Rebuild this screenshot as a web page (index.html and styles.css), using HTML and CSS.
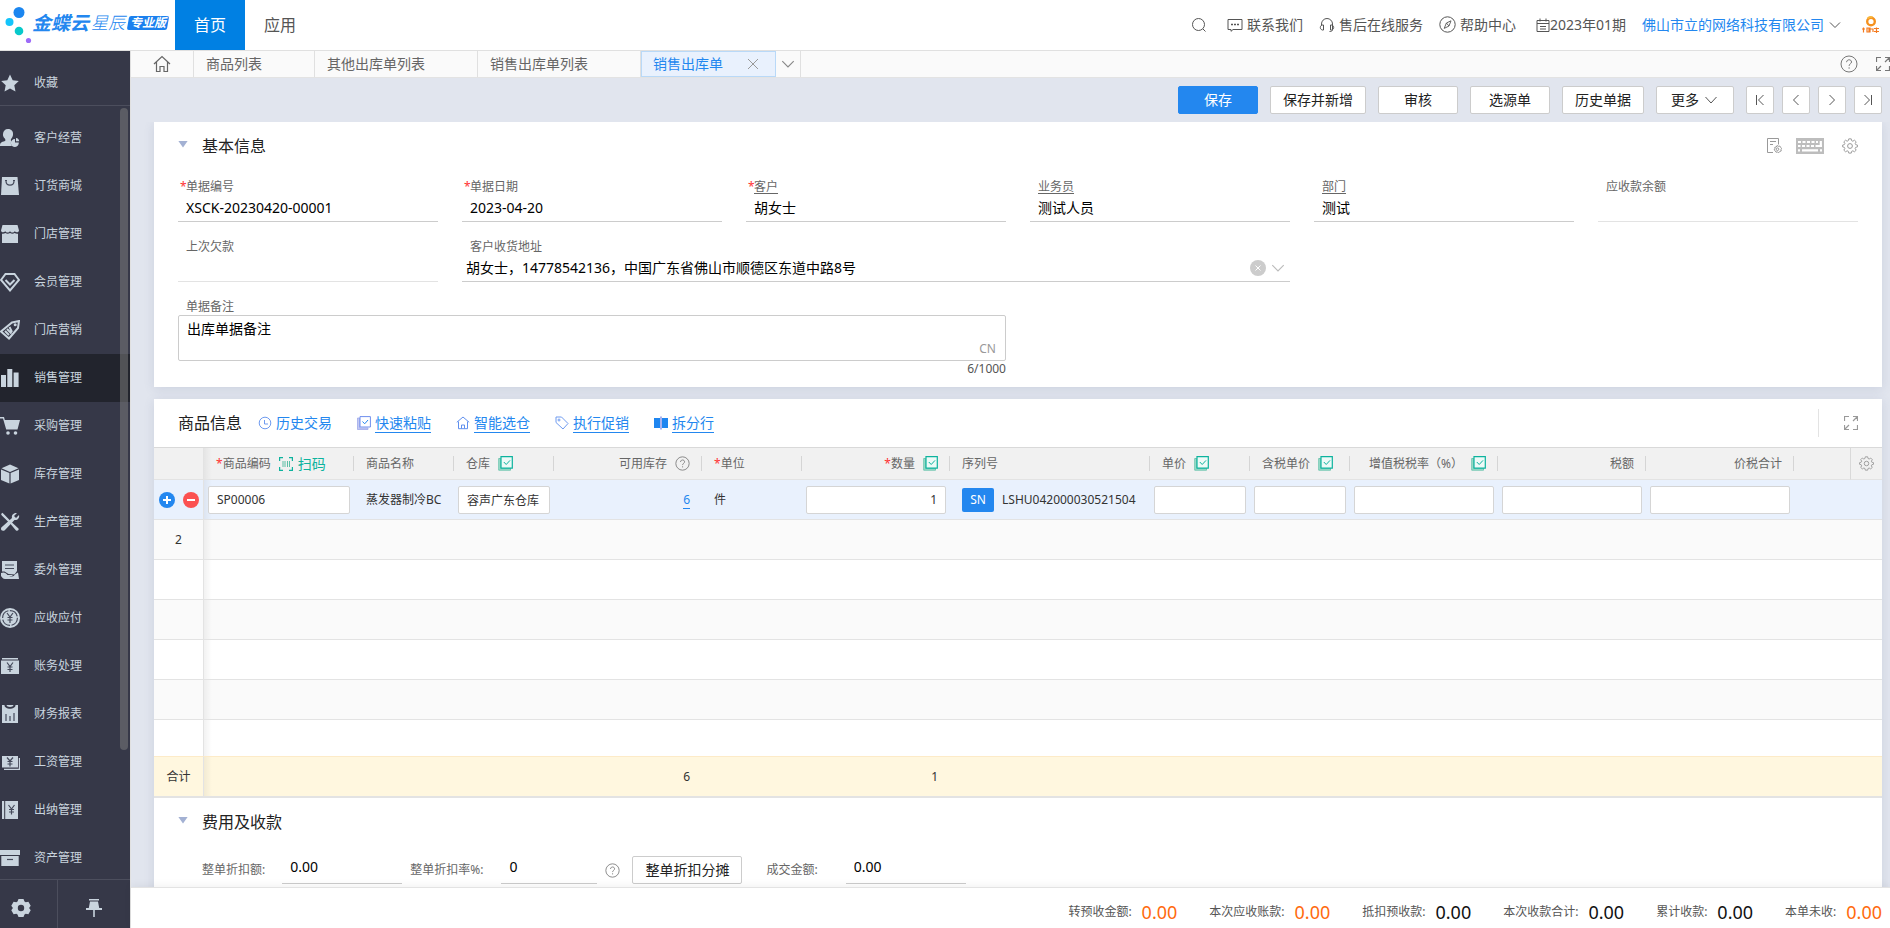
FILE: index.html
```html
<!DOCTYPE html>
<html lang="zh-CN">
<head>
<meta charset="utf-8">
<title>销售出库单</title>
<link rel="stylesheet" href="styles.css">
</head>
<body>
<svg class="defs" aria-hidden="true">
  <symbol id="i-chevron" viewBox="0 0 14 14"><path d="M2 4.5l5 5 5-5" fill="none" stroke="currentColor"/></symbol>
  <symbol id="i-help" viewBox="0 0 18 18"><circle cx="9" cy="9" r="8" fill="none" stroke="currentColor"/><path d="M6.6 7.2c0-3.2 4.9-3.2 4.9-.2 0 1.700-2.400 1.900-2.400 3.900M9.100 12.300v1.400" fill="none" stroke="currentColor"/></symbol>
  <symbol id="i-expand" viewBox="0 0 14 14"><path d="M.5 5V.5H5M9 .5h4.500V5M13.500 .5L9 5M13.500 9v4.500H9M5 13.500H.5V9M.5 13.500L5 9" fill="none" stroke="currentColor" stroke-width="1.200"/></symbol>
  <symbol id="i-gear" viewBox="0 0 16 16"><path d="M6.700 1h2.600l.4 1.900 1.300.6 1.700-1.100 1.800 1.800-1 1.700.5 1.200 1.900.5v1.800l-1.900.5-.6 1.300 1.100 1.700-1.800 1.700-1.700-1-1.200.5-.5 1.900H6.700l-.5-1.900-1.200-.5-1.700 1-1.800-1.700 1.100-1.700-.6-1.300L.2 9.400V7.600L2 7.100l.6-1.200-1.100-1.700 1.800-1.800L5 3.500l1.200-.6z" fill="none" stroke="currentColor" transform="translate(.4 -.1) scale(.95)"/><circle cx="8" cy="8" r="2.400" fill="none" stroke="currentColor"/></symbol>
  <symbol id="i-batch" viewBox="0 0 15 15"><path d="M.7 2.500v11.700h11.800V12H2.800V2.500z" fill="#9fdccb" stroke="#5cbfa6" stroke-width=".8"/><path d="M3 .7h11.300v11.400H3z" fill="#eefaf7" stroke="#0db39e" stroke-width="1.200"/><path d="M5.800 6l2.400 2.500L12 4.400" fill="none" stroke="#0db39e"/></symbol>
</svg>

<header class="topbar">
  <div class="brand">
    <svg class="brand-mark" viewBox="0 0 32 44" aria-hidden="true"><circle cx="19" cy="11.500" r="5.500" fill="#1b86f0"/><circle cx="9.500" cy="21" r="4" fill="#13c4fb"/><circle cx="19" cy="30" r="4.300" fill="#07c9cb"/><circle cx="28.500" cy="39.500" r="2.600" fill="#9d6bf8"/></svg>
    <span class="brand-name">金蝶云</span><span class="brand-sub">星辰</span>
    <span class="brand-badge">专业版</span>
  </div>
  <nav class="topnav"><a class="topnav-item current" href="#">首页</a><a class="topnav-item" href="#">应用</a></nav>
  <div class="topbar-tools">
    <button class="tool search" aria-label="搜索"><svg width="16" height="16" viewBox="0 0 16 16"><circle cx="7.500" cy="7.500" r="6" fill="none" stroke="currentColor"/><path d="M12 12l2.500 2.500" stroke="currentColor"/></svg></button>
    <a class="tool contact" href="#"><svg width="16" height="16" viewBox="0 0 16 16"><path d="M1 2.500h14v10H6l-2 1.800v-1.800H1z" fill="none" stroke="currentColor"/><path d="M4 7.500h2M7 7.500h2M10 7.500h2" stroke="currentColor" stroke-width="1.500"/></svg>联系我们</a>
    <a class="tool" href="#"><svg width="16" height="16" viewBox="0 0 16 16"><path d="M2.500 8.500V7a5.500 5.500 0 0 1 11 0v5.500c0 1.500-1 2-3 2M4.500 8v5H3.200C1.800 12.500 1.300 11.500 1.300 10.500S1.800 8.500 3 8zM11.500 8v5h1.300c1.400-.5 1.900-1.500 1.900-2.500S14.200 8.500 13 8z" fill="none" stroke="currentColor"/></svg>售后在线服务</a>
    <a class="tool" href="#"><svg width="17" height="17" viewBox="0 0 17 17"><circle cx="8.500" cy="8.500" r="7.700" fill="none" stroke="currentColor"/><path d="M12 4.800l-2 5.200-4.800 2.400L7.400 7zM7.400 7L10 10" fill="none" stroke="currentColor" stroke-width=".9"/></svg>帮助中心</a>
    <a class="tool period" href="#"><svg width="14" height="14" viewBox="0 0 14 14"><path d="M1 2.500h12v11H1zM1 5.500h12M4 .5v3M10 .5v3M4 8.500h6M4 11h6" fill="none" stroke="currentColor"/></svg>2023年01期</a>
    <button class="tool company">佛山市立的网络科技有限公司<svg width="14" height="14"><use href="#i-chevron"/></svg></button>
    <a class="avatar" href="#" aria-label="账户"><svg width="18" height="18" viewBox="0 0 18 18"><circle cx="9" cy="5.500" r="3.800" fill="none" stroke="#f5911e" stroke-width="2.400"/><path d="M5.500 2.600a4.500 4.500 0 0 1 5-1.200" stroke="#f9b63b" stroke-width="2" fill="none"/><path d="M0 13h3M1.500 11.500v5M5 12h2v4H5zM8 11.500v5M8 13h3v3M12 12.500h5M12 15.500h5M14.500 11.500v5.500" stroke="#f47b20" stroke-width="1.200" fill="none"/></svg></a>
  </div>
</header>

<div class="shell">
  <aside class="sidebar">
    <a class="side-item favorite" href="#"><svg viewBox="0 0 20 20"><path d="M10 1.500l2.700 5.700 6.100.8-4.500 4.300 1.200 6.200L10 15.500l-5.500 3 1.200-6.200L1.200 8l6.100-.8z"/></svg>收藏</a>
    <nav class="side-nav">
      <a class="side-item" href="#"><svg viewBox="0 0 20 20"><path d="M8 1c3.500 0 5.500 2.500 5 6-.3 1.800-1 3-2 4-.5 2 .2 1.500.2 2.300-.7 1.700-.3 3.200.8 4.700H0c0-3 1-4 5-5 .8-.5.400-1.500-.2-2.500C3.300 9 2.800 7.500 3 6c.2-3 2-5 5-5z"/><path d="M15 11v3.500h3.800A4 4 0 1 1 15 11z"/><path d="M16 10a3.500 3.500 0 0 1 3.200 3.200H16z"/></svg>客户经营</a>
      <a class="side-item" href="#"><svg viewBox="0 0 20 20"><path d="M2 1h15.500L19 19H1z"/><path d="M6 5c0 5.500 8 5.500 8 0M5 4.500h2M13 4.500h2" class="cut"/></svg>订货商城</a>
      <a class="side-item" href="#"><svg viewBox="0 0 20 20"><path d="M2.500 1h15L19 6.500c0 2-3 2.500-4.200.8-1.200 1.700-3.600 1.700-4.800 0-1.200 1.700-3.600 1.700-4.800 0C4 9 1 8.500 1 6.500zM2 9.700c1.300.2 2.500 0 3.300-.7 1.500 1 3.300 1 4.700 0 1.400 1 3.200 1 4.700 0 .8.700 2 .9 3.300.7V19H2z"/></svg>门店管理</a>
      <a class="side-item" href="#"><svg viewBox="0 0 20 20"><path d="M5.500 2h9L19 8l-9 10.500L1 8z" class="line"/><path d="M5.500 8l4.500 4.500L14.500 8" class="line"/></svg>会员管理</a>
      <a class="side-item" href="#"><svg viewBox="0 0 20 20"><path d="M12 2.500L19 1l-1 7-9 10.500L1 11.500z" class="line"/><path d="M7 9l4.500 4.500M9.500 7l2.500 5M5 11l4 4" class="line"/><circle cx="15.200" cy="4.800" r="1.500"/></svg>门店营销</a>
      <a class="side-item current" href="#"><svg viewBox="0 0 20 20"><path d="M1 7h5v12H1zM7.300 1h5v18h-5zM13.600 4.500h5V19h-5z"/></svg>销售管理</a>
      <a class="side-item" href="#"><svg viewBox="0 0 20 20"><path d="M0 1h4l.8 3H20l-2.500 9.500H6.200L3 2.500H0z"/><circle cx="8" cy="17" r="1.800"/><circle cx="15.500" cy="17" r="1.800"/></svg>采购管理</a>
      <a class="side-item" href="#"><svg viewBox="0 0 20 20"><path d="M10 .5l8.500 3.800L10 8 1.500 4.300zM1 5.500L9.400 9v10.500L1 16zM19 5.500L10.600 9v10.500L19 16z"/></svg>库存管理</a>
      <a class="side-item" href="#"><svg viewBox="0 0 20 20"><path d="M1 2l1.500-1.200L12 10.500l6.500 6c.8 1.500-1 3-2.500 2L10.500 12 1.800 3.500z"/><path d="M17 1l-3 3 2 2 3-3c.8 3-1.500 5.500-4.500 5L5 18c-2 2-5 .2-3.700-2.500L12 6c-.7-3 1.500-5.500 5-5z"/></svg>生产管理</a>
      <a class="side-item" href="#"><svg viewBox="0 0 20 20"><path d="M2 1h15v10l-2.500 3.500-6-.5-4-2.500H2z"/><path d="M1 13c3-1.500 5 0 6.500 2h4c1.500 0 1.500 1 .5 1.300H9c3 1.200 5-.3 6.500-2.300l2.500-1.500L19 19H5c-2 0-3-1.500-4-3z"/><path d="M5 5h9M5 8.500h9" class="cut"/></svg>委外管理</a>
      <a class="side-item" href="#"><svg viewBox="0 0 20 20"><circle cx="10" cy="10" r="10"/><circle cx="10" cy="10" r="7.400" class="cut" stroke-dasharray="10 1.500"/><path d="M7 5l3 4 3-4M10 9v6M7.500 9.500h5M7.500 12h5" class="cut"/></svg>应收应付</a>
      <a class="side-item" href="#"><svg viewBox="0 0 20 20"><path d="M2 2h16v1.500H2zM1 4.500h18V18H1z"/><path d="M7 6.500l3 4 3-4M10 10.500v5.500M7.500 11h5M7.500 13.500h5" class="cut"/></svg>账务处理</a>
      <a class="side-item" href="#"><svg viewBox="0 0 20 20"><path d="M2 1h2.500c0 5 11 5 11 0H18v18H2z"/><path d="M6.500 1c0 2.500 7 2.500 7 0z"/><path d="M6 10v7M10 12v5M14 9v8" class="cut"/></svg>财务报表</a>
      <a class="side-item" href="#"><svg viewBox="0 0 20 20"><path d="M2 4h16v11.500H2z"/><path d="M18.800 6H20v12H4v-1.200h14.800z"/><path d="M7 5.500l3 3.500 3-3.500M10 9v5.500M7.500 9.500h5M7.500 12h5" class="cut"/></svg>工资管理</a>
      <a class="side-item" href="#"><svg viewBox="0 0 20 20"><path d="M2 1h2.200v18H2zM5.200 1H18v18H5.200z"/><path d="M8.500 5l3 4 3-4M11.500 9v5.500M9 9.500h5M9 12h5" class="cut"/></svg>出纳管理</a>
      <a class="side-item" href="#"><svg viewBox="0 0 20 20"><path d="M0 2h20v5H0zM1.300 8h17.400v10H1.300z"/><path d="M7 11.500h6" class="cut"/></svg>资产管理</a>
      <span class="side-scroll"></span>
    </nav>
    <div class="side-foot">
      <button class="foot-btn setting" aria-label="设置"><svg width="20" height="20" viewBox="0 0 20 20"><path fill-rule="evenodd" d="M7.500 1h5l1 2.500 1.200.7 2.700-.4 2.300 4-1.600 2.200 1.600 2.200-2.300 4-2.700-.4-1.200.7-1 2.500h-5l-1-2.500-1.200-.7-2.700.4-2.300-4L1.900 10 .3 7.800l2.300-4 2.700.4 1.200-.7zM10 6.800a3.200 3.200 0 1 0 0 6.400 3.200 3.200 0 0 0 0-6.400z"/></svg></button>
      <button class="foot-btn" aria-label="固定"><svg width="18" height="20" viewBox="0 0 18 20"><path d="M4 1h10v1.500H4zM5 3.500h8l1.200 6.500H17v2H1v-2h2.800zM8.200 12h1.600v7H8.200z"/></svg></button>
    </div>
  </aside>

  <main class="main">
    <div class="tabs">
      <button class="tab home" aria-label="主页"><svg width="18" height="18" viewBox="0 0 18 18"><path d="M1 9L9 1.500 17 9M3.500 7v9.500H7v-5h4v5h3.500V7" fill="none" stroke="currentColor" stroke-width="1.200"/></svg></button>
      <button class="tab">商品列表</button>
      <button class="tab wide">其他出库单列表</button>
      <button class="tab wide">销售出库单列表</button>
      <button class="tab active">销售出库单<svg width="12" height="12" viewBox="0 0 12 12"><path d="M1 1l10 10M11 1L1 11" stroke="#999"/></svg></button>
      <button class="tab more" aria-label="更多标签"><svg width="16" height="16"><use href="#i-chevron"/></svg></button>
      <div class="tabs-tools">
        <button class="icon-btn" aria-label="帮助"><svg width="18" height="18"><use href="#i-help"/></svg></button>
        <button class="icon-btn" aria-label="全屏"><svg width="14" height="14"><use href="#i-expand"/></svg></button>
      </div>
    </div>

    <div class="actions">
      <button class="btn primary">保存</button>
      <button class="btn">保存并新增</button>
      <button class="btn">审核</button>
      <button class="btn">选源单</button>
      <button class="btn">历史单据</button>
      <button class="btn menu">更多<svg width="16" height="14" viewBox="0 0 16 14"><path d="M2.500 4L8 10l5.500-6" fill="none" stroke="#555"/></svg></button>
      <div class="pager">
        <button class="btn square" aria-label="第一张"><svg width="12" height="12" viewBox="0 0 12 12"><path d="M2.500 1v10M9.500 1L4.500 6l5 5" fill="none" stroke="#555"/></svg></button>
        <button class="btn square" aria-label="上一张"><svg width="12" height="12" viewBox="0 0 12 12"><path d="M8.500 1l-5 5 5 5" fill="none" stroke="#555"/></svg></button>
        <button class="btn square" aria-label="下一张"><svg width="12" height="12" viewBox="0 0 12 12"><path d="M3.500 1l5 5-5 5" fill="none" stroke="#555"/></svg></button>
        <button class="btn square" aria-label="最后一张"><svg width="12" height="12" viewBox="0 0 12 12"><path d="M9.500 1v10M2.500 1l5 5-5 5" fill="none" stroke="#555"/></svg></button>
      </div>
    </div>

    <div class="workspace">
      <section class="card basic">
        <div class="card-head">
          <span class="fold"></span><h2>基本信息</h2>
          <div class="head-icons">
            <button class="icon-btn light" aria-label="单据设置"><svg width="16" height="16" viewBox="0 0 16 16"><path d="M7 14.500H1.500V.5h11v6M4 3.500h6M4 6.500h3" fill="none" stroke="currentColor"/><path d="M11 7.500l1.300.8 1.500-.3.700 1.400 1.200.9-.7 1.300.2 1.400-1.400.4-1 1.300-1.300-.7-1.500.2-.6-1.300-1.300-1 .7-1.200V9.300l1.400-.3z" fill="none" stroke="currentColor"/><circle cx="11.500" cy="11.200" r="1.300" fill="none" stroke="currentColor"/></svg></button>
            <button class="icon-btn light" aria-label="快捷键"><svg width="28" height="16" viewBox="0 0 28 16"><path d="M0 0h28v16H0z" fill="#bdbdbd"/><path d="M2 4h3M6.500 4h3M11 4h3M15.500 4h3M20 4h2M2 8h2.500M6 8h3M10.500 8h3M15 8h3M19.500 8H26M24.800 3v5.500M2 12.300h2M6 12.300h16M24 12.300h2" fill="none" stroke="#fff" stroke-width="2.200"/></svg></button>
            <button class="icon-btn light" aria-label="设置"><svg width="16" height="16"><use href="#i-gear"/></svg></button>
          </div>
        </div>
        <div class="fields">
          <div class="field required"><label for="no">单据编号</label><input id="no" value="XSCK-20230420-00001"></div>
          <div class="field required"><label for="date">单据日期</label><input id="date" value="2023-04-20"></div>
          <div class="field required linked"><label for="cust">客户</label><input id="cust" value="胡女士"></div>
          <div class="field linked"><label for="staff">业务员</label><input id="staff" value="测试人员"></div>
          <div class="field linked"><label for="dept">部门</label><input id="dept" value="测试"></div>
          <div class="field readonly"><label for="bal">应收款余额</label><input id="bal" readonly></div>
          <div class="field readonly"><label for="debt">上次欠款</label><input id="debt" readonly></div>
          <div class="field address"><label for="addr">客户收货地址</label><select id="addr"><option>胡女士，14778542136，中国广东省佛山市顺德区东道中路8号</option></select>
            <span class="address-icons"><svg width="16" height="16" viewBox="0 0 16 16"><circle cx="8" cy="8" r="8" fill="#ccc"/><path d="M5.500 5.500l5 5M10.500 5.500l-5 5" stroke="#fff"/></svg><svg width="16" height="16"><use href="#i-chevron"/></svg></span></div>
          <div class="field remark"><label for="memo">单据备注</label><textarea id="memo">出库单据备注</textarea><span class="lang">CN</span><span class="count">6/1000</span></div>
        </div>
      </section>

      <section class="card goods">
        <div class="card-head goods-head">
          <h2>商品信息</h2>
          <div class="links">
            <a class="link plain" href="#"><svg width="14" height="14" viewBox="0 0 14 14"><circle cx="7" cy="7" r="5.800" fill="none" stroke="#6f9bf0"/><path d="M6.500 4v4H10" fill="none" stroke="#6f9bf0"/></svg><span>历史交易</span></a>
            <a class="link" href="#"><svg width="14" height="14" viewBox="0 0 14 14"><path d="M.5 2v11.500H11V12H2.500V2z" fill="#c3c9f3" stroke="#9fa9ea" stroke-width=".8"/><path d="M3 .6h10.400V11H3z" fill="#fff" stroke="#6f8fee"/><path d="M5.500 5.500l2.200 2.300L11 4" fill="none" stroke="#2387ef"/></svg><span>快速粘贴</span></a>
            <a class="link" href="#"><svg width="14" height="14" viewBox="0 0 14 14"><path d="M.8 6.300L7 1l6.200 5.300M2.500 5.500v7.200h9V5.500M5.500 12.500V9h3v3.500" fill="none" stroke="#5f8fee"/></svg><span>智能选仓</span></a>
            <a class="link" href="#"><svg width="14" height="14" viewBox="0 0 14 14"><path d="M1 1h5.500l6.500 6.500L8 13 1 6.500z" fill="none" stroke="#6f9bf0"/><circle cx="4" cy="4" r="1" fill="none" stroke="#6f9bf0"/></svg><span>执行促销</span></a>
            <a class="link" href="#"><svg width="14" height="14" viewBox="0 0 14 14"><path d="M0 2h6v10H0zM8 2h6v10H8z" fill="#1f86f0"/><path d="M6 .5h2v13H6z" fill="#a9b2ee"/></svg><span>拆分行</span></a>
          </div>
          <div class="goods-expand"><button class="icon-btn light" aria-label="展开"><svg width="14" height="14"><use href="#i-expand"/></svg></button></div>
        </div>
        <table class="grid">
          <colgroup><col class="w50"><col class="w150"><col class="w100"><col class="w100"><col class="w148"><col class="w100"><col class="w148"><col class="w200"><col class="w100"><col class="w100"><col class="w148"><col class="w148"><col class="w148"><col><col class="w32"></colgroup>
          <thead><tr>
            <th></th>
            <th class="sep star"><div><span>商品编码</span><svg width="14" height="14" viewBox="0 0 14 14"><path d="M.6 4V.6H4M10 .6h3.400V4M13.400 10v3.400H10M4 13.400H.6V10" fill="none" stroke="#0db39e" stroke-width="1.200"/><path d="M4 4v6M6 4v6M8.500 4v6M10.500 4v6" stroke="#5cbfa6"/></svg><button class="scan">扫码</button></div></th>
            <th class="sep"><div>商品名称</div></th>
            <th class="sep"><div>仓库<svg width="15" height="15"><use href="#i-batch"/></svg></div></th>
            <th class="sep end"><div>可用库存<svg class="grey" width="15" height="15"><use href="#i-help"/></svg></div></th>
            <th class="sep star"><div><span>单位</span></div></th>
            <th class="sep end star"><div><span>数量</span><svg width="15" height="15"><use href="#i-batch"/></svg></div></th>
            <th class="sep"><div>序列号</div></th>
            <th class="sep"><div>单价<svg width="15" height="15"><use href="#i-batch"/></svg></div></th>
            <th class="sep"><div>含税单价<svg width="15" height="15"><use href="#i-batch"/></svg></div></th>
            <th class="sep end"><div>增值税税率（%）<svg width="15" height="15"><use href="#i-batch"/></svg></div></th>
            <th class="sep end"><div>税额</div></th>
            <th class="sep end"><div>价税合计</div></th>
            <th></th>
            <th class="config"><button class="icon-btn light" aria-label="列设置"><svg width="15" height="15"><use href="#i-gear"/></svg></button></th>
          </tr></thead>
          <tbody>
            <tr class="selected">
              <td class="ops"><div><button class="round" aria-label="增加行"><svg width="16" height="16" viewBox="0 0 16 16"><circle cx="8" cy="8" r="8" fill="#2387ef"/><path d="M4 8h8M8 4v8" stroke="#fff" stroke-width="2"/></svg></button><button class="round" aria-label="删除行"><svg width="16" height="16" viewBox="0 0 16 16"><circle cx="8" cy="8" r="8" fill="#fb5151"/><path d="M4 8h8" stroke="#fff" stroke-width="2"/></svg></button></div></td>
              <td class="edit"><input aria-label="商品编码" value="SP00006"></td>
              <td>蒸发器制冷BC</td>
              <td class="edit"><input aria-label="仓库" value="容声广东仓库"></td>
              <td class="num"><a class="stock" href="#">6</a></td>
              <td>件</td>
              <td class="edit"><input class="right" aria-label="数量" value="1"></td>
              <td><div class="serial"><button class="sn">SN</button>LSHU042000030521504</div></td>
              <td class="edit"><input aria-label="单价"></td>
              <td class="edit"><input aria-label="含税单价"></td>
              <td class="edit"><input aria-label="增值税税率"></td>
              <td class="edit"><input aria-label="税额"></td>
              <td class="edit"><input aria-label="价税合计"></td>
              <td colspan="2"></td>
            </tr>
            <tr><td>2</td><td colspan="14"></td></tr>
            <tr><td></td><td colspan="14"></td></tr>
            <tr><td></td><td colspan="14"></td></tr>
            <tr><td></td><td colspan="14"></td></tr>
            <tr><td></td><td colspan="14"></td></tr>
            <tr class="last"><td></td><td colspan="14"></td></tr>
          </tbody>
          <tfoot><tr><td>合计</td><td colspan="3"></td><td class="num">6</td><td></td><td class="num">1</td><td colspan="8"></td></tr></tfoot>
        </table>

        <div class="card-head"><span class="fold"></span><h2>费用及收款</h2></div>
        <div class="fees">
          <label for="disc">整单折扣额:</label><input id="disc" class="fee" value="0.00">
          <label for="rate">整单折扣率%:</label><input id="rate" class="fee short" value="0">
          <button class="icon-btn" aria-label="折扣说明"><svg width="15" height="15"><use href="#i-help"/></svg></button>
          <button class="btn split">整单折扣分摊</button>
          <label for="deal">成交金额:</label><input id="deal" class="fee deal" value="0.00">
        </div>
      </section>
    </div>

    <footer class="summary">
      <div class="sum hot"><span>转预收金额:</span><b>0.00</b></div>
      <div class="sum hot"><span>本次应收账款:</span><b>0.00</b></div>
      <div class="sum"><span>抵扣预收款:</span><b>0.00</b></div>
      <div class="sum"><span>本次收款合计:</span><b>0.00</b></div>
      <div class="sum"><span>累计收款:</span><b>0.00</b></div>
      <div class="sum hot"><span>本单未收:</span><b>0.00</b></div>
    </footer>
  </main>
</div>
</body>
</html>
```
FILE: styles.css
```css
* { box-sizing: border-box; }
body {
  margin: 0;
  height: 100vh;
  display: flex;
  flex-direction: column;
  overflow: hidden;
  font: 12px/16px "Noto Sans", "Noto Sans CJK SC", sans-serif;
  color: #333;
  background: #e1e5ee;
}
button, input, select, textarea { font: inherit; color: inherit; margin: 0; padding: 0; border: 0; background: none; border-radius: 0; outline: 0; min-width: 0; }
button { white-space: nowrap; cursor: pointer; }
a { color: inherit; text-decoration: none; }
svg { flex: none; display: block; }
.defs { position: absolute; width: 0; height: 0; }

.topbar { flex: none; display: flex; height: 51px; background: #fff; border-bottom: 1px solid #e0e0e0; font-size: 14px; line-height: 20px; color: #555; }
.brand { width: 175px; height: 46px; display: flex; align-items: center; }
.brand-mark { width: 32px; height: 44px; }
.brand-name { font-size: 19px; font-weight: 700; font-style: italic; color: #2387ef; margin-right: 2px; }
.brand-sub { font-size: 17px; font-weight: 300; font-style: italic; color: #2387ef; margin-right: 3px; }
.brand-badge { position: relative; z-index: 0; padding: 0 2px; line-height: 14px; font-size: 12px; font-weight: 700; font-style: italic; color: #fff; }
.brand-badge::before { content: ""; position: absolute; z-index: -1; inset: 0; background: #1b80ee; border-radius: 2px; transform: skewX(-10deg); }
.topnav { display: flex; height: 50px; font-size: 16px; }
.topnav-item { width: 70px; display: flex; align-items: center; justify-content: center; }
.topnav-item.current { background: #0080e3; color: #fff; }
.topbar-tools { margin-left: auto; height: 49px; padding-right: 10px; display: flex; align-items: center; gap: 16px; white-space: nowrap; }
.tool { display: flex; align-items: center; gap: 4px; }
.search { margin-right: 4px; }
.period { gap: 0; margin-left: 4px; }
.company { color: #2387ef; }
.company svg { color: #555; }
.avatar { margin-left: 4px; }

.shell { flex: 1; min-height: 0; display: flex; }
.sidebar { flex: none; width: 130px; display: flex; flex-direction: column; background: #363848; color: #c9d4de; }
.side-item { flex: none; height: 48px; display: flex; align-items: center; gap: 14px; }
.side-item svg { width: 20px; height: 20px; fill: #c9d4de; }
.side-item .line { fill: none; stroke: #c9d4de; stroke-width: 2; }
.side-item .cut { fill: none; stroke: #454a5b; stroke-width: 1.2; }
.side-item.favorite { height: 55px; padding-top: 10px; border-bottom: 1px solid #4c4e5d; }
.side-item.current { background: #22242d; }
.side-nav { position: relative; flex: 1; min-height: 0; overflow: hidden; padding-top: 8px; display: flex; flex-direction: column; }
.side-scroll { position: absolute; top: 2px; right: 2px; width: 8px; height: 83%; border-radius: 4px; background: rgba(128, 128, 128, .5); }
.side-foot { flex: none; height: 49px; display: flex; border-top: 1px solid #4c4e5d; }
.foot-btn { flex: 1; display: flex; align-items: center; justify-content: center; padding-top: 8px; }
.foot-btn svg { fill: #c9d4de; }
.foot-btn.setting { flex: none; width: 58px; padding-right: 16px; border-right: 1px solid #4c4e5d; }

.main { flex: 1; min-width: 0; display: flex; flex-direction: column; border-left: 1px solid #e0e0e0; }
.tabs { flex: none; height: 27px; display: flex; background: #fafafa; border-bottom: 1px solid #e3e3e3; font-size: 14px; line-height: 20px; color: #666; }
.tab { width: 121px; padding: 0 12px; text-align: left; border-right: 1px solid #e0e0e0; }
.tab.home { width: 63px; padding-left: 22px; }
.tab.wide { width: 163px; }
.tab.active { width: 135px; display: flex; align-items: center; justify-content: space-between; padding: 0 16px 0 11px; color: #2387ef; background: #e9f1fd; border: 1px solid #b9d9f8; }
.tab.more { width: 25px; padding: 0 4px; color: #888; }
.tabs-tools { margin-left: auto; display: flex; align-items: center; gap: 18px; }
.icon-btn { display: flex; color: #777; }
.icon-btn.light { color: #999; }

.actions { flex: none; display: flex; justify-content: flex-end; gap: 12px; padding: 8px; }
.btn { height: 28px; min-width: 80px; padding: 0 12px; display: flex; align-items: center; justify-content: center; gap: 4px; background: #fff; border: 1px solid #ccc; border-radius: 2px; font-size: 14px; line-height: 20px; color: #222; }
.btn.primary { background: #2387ef; border-color: #2387ef; color: #fff; }
.btn.menu { min-width: 78px; }
.btn.square { min-width: 28px; width: 28px; padding: 0; }
.pager { display: flex; gap: 8px; }

.workspace { flex: 1; min-height: 0; overflow: hidden; padding: 0 8px 0 23px; }
.card { background: #fff; box-shadow: 0 2px 10px rgba(80, 95, 135, .14); }
.card-head { height: 48px; padding: 0 24px; display: flex; align-items: center; }
.card-head h2 { margin: 0; font-size: 16px; line-height: 24px; font-weight: 400; color: #222; }
.fold { width: 10px; height: 7px; margin: 0 14px 4px 0; background: #a3b1d3; clip-path: polygon(0 0, 100% 0, 50% 100%); }
.head-icons { margin-left: auto; display: flex; gap: 14px; align-items: center; }
.head-icons > :last-child { margin-left: 4px; }
.basic { padding-bottom: 10px; }

.fields { display: grid; grid-template-columns: repeat(6, minmax(0, 1fr)); gap: 8px 24px; padding: 0 24px; }
.field { position: relative; display: flex; flex-direction: column; padding-top: 9px; }
.field label { align-self: flex-start; margin-left: 8px; color: #666; line-height: 16px; }
.field.linked label { text-decoration: underline; text-underline-offset: 2px; }
.field.required::before, .star span::before { content: "*"; color: #f33; }
.field.required::before { position: absolute; left: 2px; top: 9px; }
.field input, .field select { height: 27px; padding: 0 8px 2px; border-bottom: 1px solid #ccc; font-size: 14px; color: #000; width: 100%; }
.field.readonly input { border-bottom-color: #e3e3e3; }
.field.address { grid-column: span 3; }
.field select { appearance: none; padding: 0 56px 0 4px; }
.address-icons { position: absolute; right: 4px; bottom: 6px; display: flex; gap: 4px; color: #bbb; pointer-events: none; }
.field.remark { grid-column: 1 / span 3; }
.field textarea { height: 46px; padding: 3px 8px; border: 1px solid #ccc; border-radius: 2px; resize: none; font-size: 14px; line-height: 20px; color: #000; }
.lang { position: absolute; right: 10px; bottom: 20px; color: #999; }
.count { align-self: flex-end; line-height: 16px; color: #555; }

.goods { margin-top: 12px; }
.goods-head { height: 49px; border-bottom: 1px solid #d9d9d9; }
.links { display: flex; gap: 25px; margin-left: 16px; font-size: 14px; line-height: 18px; color: #2387ef; }
.link { display: flex; align-items: center; gap: 4px; }
.link span { border-bottom: 1px solid #2387ef; }
.link.plain span { border-color: transparent; }
.goods-expand { margin-left: auto; height: 28px; padding-left: 25px; display: flex; align-items: center; border-left: 1px solid #e3e3e3; }

.grid { width: 100%; table-layout: fixed; border-collapse: separate; border-spacing: 0; }
.w32 { width: 32px; }
.w50 { width: 50px; }
.w100 { width: 100px; }
.w148 { width: 148px; }
.w150 { width: 150px; }
.w200 { width: 200px; }
.grid th { height: 32px; padding: 0 12px; font-weight: 400; text-align: left; color: #666; background-color: #f1f1f1; border-bottom: 1px solid #e3e3e3; white-space: nowrap; }
.grid th div { display: flex; align-items: center; gap: 8px; }
.grid th.sep { position: relative; }
.grid th.sep::after { content: ""; position: absolute; right: 0; top: 8px; width: 1px; height: 15px; background: #d5d5d5; }
.grid th.end div { justify-content: flex-end; }
.grid .grey { color: #777; }
.grid th.config { padding: 0 8px; border-left: 1px solid #d9d9d9; }
.scan { font-size: 14px; color: #0db39e; margin-left: -3px; }
.grid td { height: 40px; padding: 0 12px; border-bottom: 1px solid #e3e3e3; white-space: nowrap; }
.grid td:first-child, .grid th:first-child { padding: 0; text-align: center; border-right: 1px solid #e3e3e3; }
.grid tr > :nth-child(2) { background-image: linear-gradient(90deg, rgba(0, 0, 0, .05), transparent 8px); background-repeat: no-repeat; }
.grid tbody tr:nth-child(even) td { background-color: #fafafa; }
.grid tbody .selected td { background-color: #e9f1fd; }
.grid tbody .last td { height: 36px; border-bottom: 0; }
.grid .num { text-align: right; }
.grid td.edit { padding: 0 4px; }
.grid td input { display: block; width: 100%; height: 28px; padding: 0 8px; background: #fff; border: 1px solid #d5d5d5; border-radius: 2px; }
.grid td input.right { text-align: right; }
.ops div { display: flex; justify-content: center; gap: 8px; }
.round { display: flex; }
.stock { color: #2387ef; border-bottom: 1px solid #2387ef; }
.serial { display: flex; align-items: center; gap: 8px; }
.sn { width: 32px; height: 24px; border-radius: 2px; background: #2387ef; color: #fff; }
.grid tfoot td { background-color: #fff7df; border-top: 1px solid #fdebc8; border-bottom: 2px solid #e3e3e3; height: 42px; }

.fees { display: flex; align-items: center; padding: 10px 24px 10px 48px; color: #666; }
.fee { width: 120px; height: 28px; margin: 0 8px 0 17px; padding: 0 8px 6px; border-bottom: 1px solid #ccc; font-size: 14px; color: #000; }
.fee.short { width: 96px; margin-left: 18px; }
.btn.split { margin: 0 24px 0 12px; }
.fee.deal { margin-left: 28px; }

.summary { position: relative; flex: none; height: 41px; display: flex; align-items: center; justify-content: flex-end; gap: 32px; padding: 8px 8px 0; background: #fff; border-top: 1px solid #e3e3e3; box-shadow: 0 -2px 8px rgba(0, 0, 0, .05); color: #555; }
.sum { display: flex; align-items: center; gap: 10px; }
.sum b { font-size: 18px; font-weight: 400; line-height: 20px; color: #111; }
.sum.hot b { color: #ff6a0d; }
```
